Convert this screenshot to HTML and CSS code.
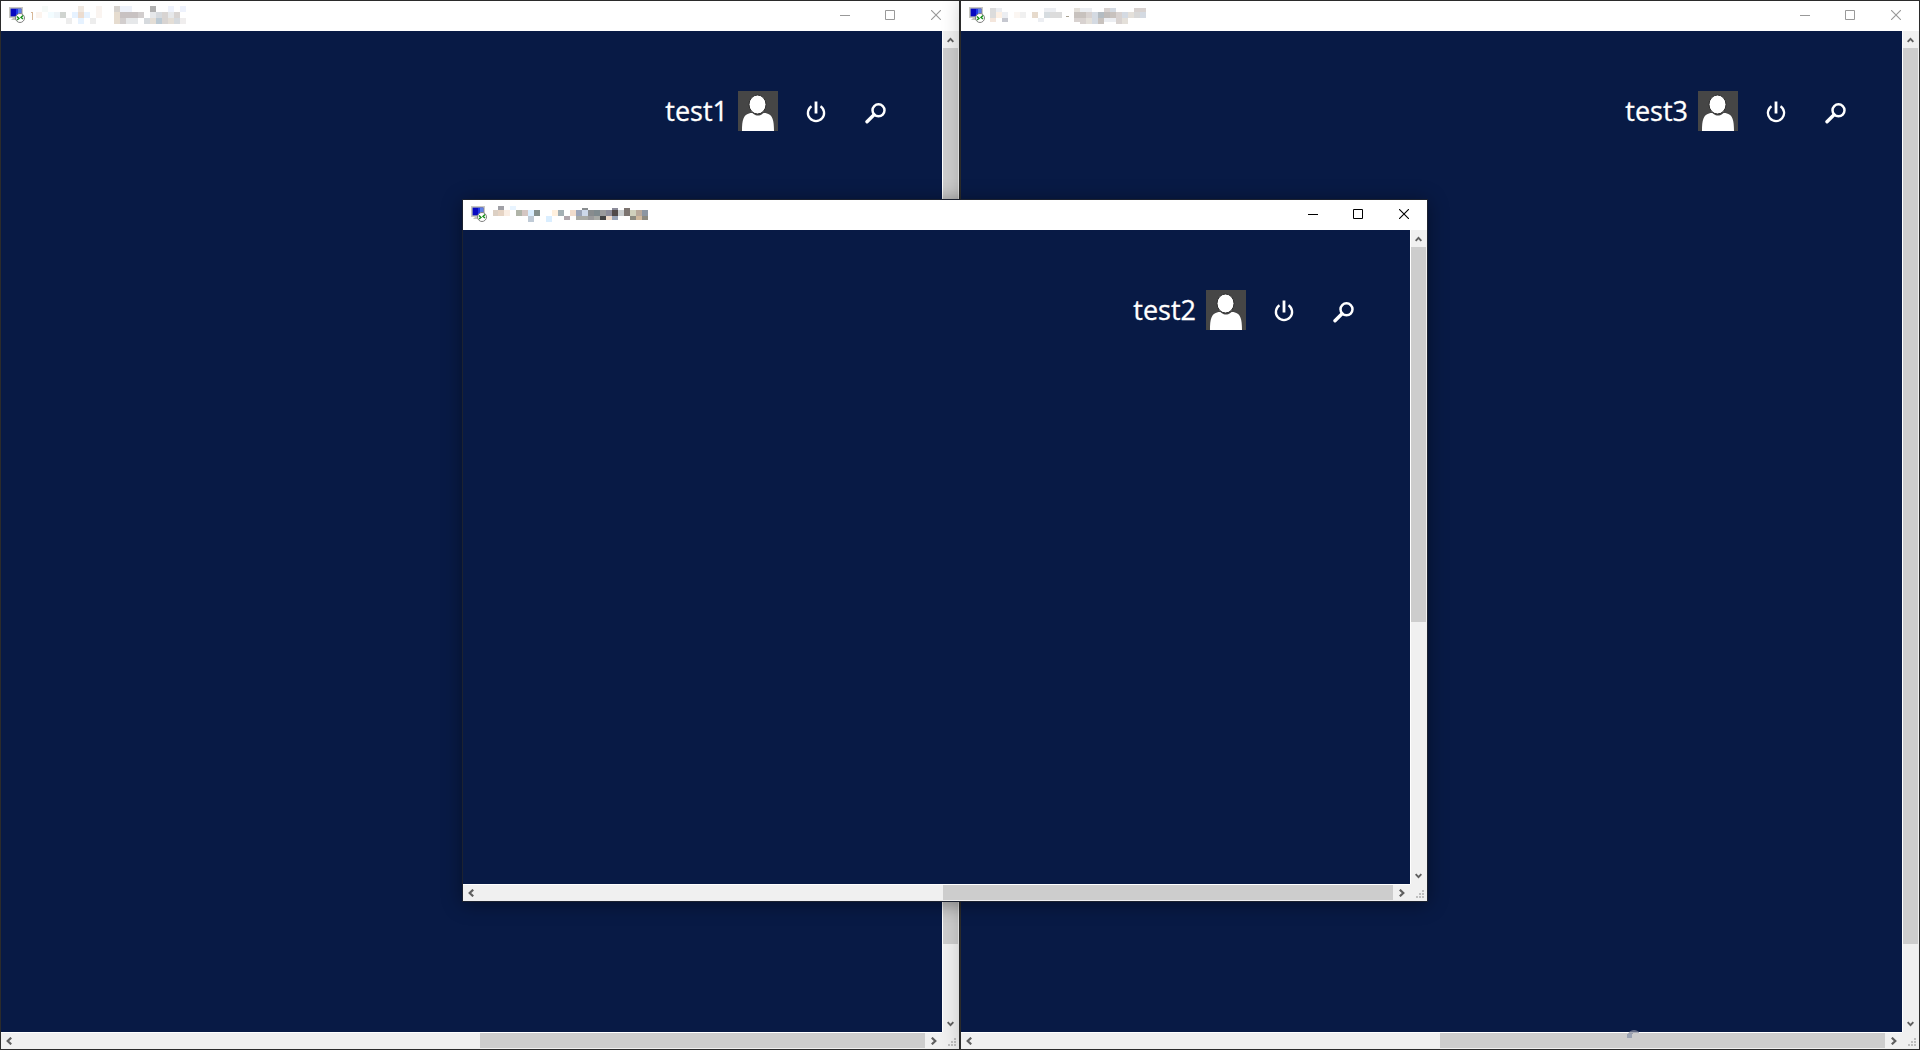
FILE: index.html
```html
<!DOCTYPE html>
<html lang="en">
<head>
<meta charset="utf-8">
<title>Remote desktops</title>
<link rel="stylesheet" href="styles.css">
</head>
<body>
<svg class="defs" aria-hidden="true">
  <symbol id="app" viewBox="0 0 16 16">
    <path d="M0 0h14v11H0z" fill="#c8c8c2"/><path d="M1.500 1.500h11v8h-11z" fill="#2632b8"/>
    <path d="M2 2h5v7H2z" fill="#0808c0"/><path d="M7 2h2v7H7z" fill="#2038e8"/><path d="M9 2h3v5H9z" fill="#5c80e8"/>
    <path d="M4 11h5v2H2z" fill="#c4c4bc"/>
    <circle cx="11" cy="11" r="4.500" fill="#fff" stroke="#808080"/>
    <path d="M8 9.500l2 2-2 1.500M14 8.500l-2 2 2 1.500" fill="none" stroke="#18901c" stroke-width="1.400"/>
  </symbol>
  <symbol id="min" viewBox="0 0 10 10"><path d="M0 5.500h10" stroke="currentColor"/></symbol>
  <symbol id="max" viewBox="0 0 10 10"><path d="M.5.5h9v9h-9z" fill="none" stroke="currentColor"/></symbol>
  <symbol id="close" viewBox="0 0 10 10"><path d="M0 0l10 10M10 0L0 10" stroke="currentColor" stroke-width="1.100"/></symbol>
  <symbol id="up" viewBox="0 0 8 6"><path d="M.7 5.200L4 1.700l3.300 3.500" fill="none" stroke="#606060" stroke-width="2.200"/></symbol>
  <symbol id="down" viewBox="0 0 8 6"><path d="M.7.8L4 4.300 7.300.8" fill="none" stroke="#606060" stroke-width="2.200"/></symbol>
  <symbol id="left" viewBox="0 0 6 8"><path d="M5.200.7L1.700 4l3.500 3.300" fill="none" stroke="#606060" stroke-width="2.200"/></symbol>
  <symbol id="right" viewBox="0 0 6 8"><path d="M.8.7L4.300 4 .8 7.300" fill="none" stroke="#606060" stroke-width="2.200"/></symbol>
  <symbol id="grip" viewBox="0 0 8 8"><path d="M6 0h2v2H6zM3 3h2v2H3zM6 3h2v2H6zM0 6h2v2H0zM3 6h2v2H3zM6 6h2v2H6z" fill="#bfbfbf"/></symbol>
  <symbol id="user" viewBox="0 0 40 40">
    <path d="M0 0h40v40H0z" fill="#464646"/>
    <path d="M4 40C4 29 5.500 24 11 22.500c3-.8 3.500-.5 5 .7 2 1.700 6 1.700 8 0 1.500-1.200 2-1.500 5-.7C34.500 24 36 29 36 40z" fill="#fff"/>
    <ellipse cx="19.500" cy="13.500" rx="8.500" ry="9.500" fill="#fff" stroke="#303030"/>
  </symbol>
  <symbol id="power" viewBox="0 0 20 22">
    <path d="M5.500 5.200a8.100 8.100 0 1 0 9 0" fill="none" stroke="#fff" stroke-width="2.300"/>
    <path d="M10 .5v12" stroke="#fff" stroke-width="2.800"/>
  </symbol>
  <symbol id="search" viewBox="0 0 21 21">
    <circle cx="13.500" cy="7.300" r="6" fill="none" stroke="#fff" stroke-width="2.500"/>
    <path d="M9 11.800L2 18.800" stroke="#fff" stroke-width="3.400" stroke-linecap="round"/>
  </symbol>
</svg>

<main class="desktop">
  <section class="window" aria-label="test1 session">
    <header class="titlebar">
      <svg class="app"><use href="#app"/></svg>
      <svg class="caption" viewBox="0 0 160 18">
        <path d="M1 7l2-1M2.500 6v8" stroke="#d8b898" fill="none"/>
        <path fill="#f6faf8" d="M12 0h6v6h-6z"/><path fill="#f0e8e0" d="M48 0h6v6h-6z"/><path fill="#faf4f0" d="M66 0h6v12h-6z"/>
        <path fill="#d6d2ce" d="M84 0h6v6h-6z"/><path fill="#eef2fa" d="M90 0h12v6H90z"/><path fill="#b0b0b0" d="M120 0h6v6h-6z"/><path fill="#eef2fc" d="M138 0h6v6h-6zM150 0h6v6h-6z"/>
        <path fill="#fcf4ee" d="M6 6h6v6H6z"/><path fill="#f2fcff" d="M18 6h6v6h-6z"/><path fill="#eef4f8" d="M24 6h6v6h-6z"/><path fill="#d0d4d0" d="M30 6h6v6h-6z"/>
        <path fill="#e6f2ff" d="M42 6h6v6h-6zM54 6h6v6h-6zM48 12h6v6h-6z"/><path fill="#ecdccf" d="M48 6h6v6h-6z"/><path fill="#ededed" d="M36 12h6v6h-6zM60 12h6v6h-6z"/>
        <path fill="#e6dccf" d="M84 6h6v12h-6z"/><path fill="#c8c2c2" d="M90 6h18v6H90z"/><path fill="#d2cece" d="M90 12h6v6h-6zM108 6h6v6h-6z"/>
        <path fill="#e6e8ea" d="M96 12h12v6H96zM120 6h6v6h-6zM138 6h6v6h-6z"/><path fill="#d6dade" d="M114 12h6v6h-6zM126 6h6v6h-6zM144 12h6v6h-6z"/>
        <path fill="#e4ded6" d="M120 12h6v6h-6zM138 12h6v6h-6z"/><path fill="#bccad4" d="M126 12h6v6h-6z"/><path fill="#d8d4d2" d="M132 6h6v12h-6zM144 6h6v6h-6z"/><path fill="#f0eeee" d="M150 12h6v6h-6z"/>
      </svg>
      <div class="controls">
        <button aria-label="Minimize"><svg><use href="#min"/></svg></button>
        <button aria-label="Maximize"><svg><use href="#max"/></svg></button>
        <button aria-label="Close"><svg><use href="#close"/></svg></button>
      </div>
    </header>
    <div class="screen">
      <div class="account"><span class="name">test1</span>
        <svg class="avatar"><use href="#user"/></svg>
        <button class="power" aria-label="Power"><svg><use href="#power"/></svg></button>
        <button class="search" aria-label="Search"><svg><use href="#search"/></svg></button>
      </div>
    </div>
    <div class="bar vertical">
      <button aria-label="Scroll up"><svg><use href="#up"/></svg></button>
      <div class="track"><div class="thumb" style="height:92.7%"></div></div>
      <button aria-label="Scroll down"><svg><use href="#down"/></svg></button>
    </div>
    <div class="bar horizontal">
      <button aria-label="Scroll left"><svg><use href="#left"/></svg></button>
      <div class="track"><div class="thumb" style="width:49.1%"></div></div>
      <button aria-label="Scroll right"><svg><use href="#right"/></svg></button>
    </div>
    <div class="corner"><svg><use href="#grip"/></svg></div>
  </section>

  <section class="window raised" aria-label="test3 session">
    <header class="titlebar">
      <svg class="app"><use href="#app"/></svg>
      <svg class="caption" viewBox="0 0 160 18">
        <path fill="#dcdcdc" d="M0 2h6v10H0zM60 6h12v6H60z"/><path fill="#eceef2" d="M6 2h6v4H6zM12 6h6v6h-6zM54 2h12v4H54zM48 12h6v4h-6z"/>
        <path fill="#fdf0e4" d="M6 6h6v6H6z"/><path fill="#f4e6dc" d="M0 12h6v4H0z"/><path fill="#c6c8d0" d="M12 12h6v4h-6z"/>
        <path fill="#fbf6f2" d="M24 6h6v6h-6z"/><path fill="#f0f0f0" d="M30 6h6v6h-6z"/><path fill="#e6dacc" d="M42 6h6v6h-6z"/><path fill="#d6dce0" d="M54 6h6v6h-6z"/>
        <path fill="#a8a090" d="M76 10h3v1h-3z"/>
        <path fill="#c8c2be" d="M84 6h6v6h-6zM90 6h6v6h-6zM120 6h6v6h-6zM108 12h6v6h-6z"/>
        <path fill="#d8d2d0" d="M84 12h6v4h-6zM90 12h6v6h-6zM96 6h6v6h-6zM126 6h6v6h-6zM126 12h6v6h-6zM114 2h6v4h-6zM144 2h12v4h-12z"/>
        <path fill="#b4bcc2" d="M108 6h6v6h-6z"/><path fill="#c0bcba" d="M114 6h6v6h-6z"/><path fill="#d4dae2" d="M102 6h6v6h-6zM102 12h6v6h-6zM120 2h6v4h-6zM132 6h6v6h-6zM150 6h6v6h-6z"/>
        <path fill="#e4e0da" d="M96 12h6v6h-6zM138 6h6v6h-6zM132 12h6v6h-6zM84 2h6v4h-6z"/><path fill="#d8d8d8" d="M144 6h6v6h-6z"/><path fill="#eceef2" d="M90 2h12v4H90zM114 12h12v4h-12z"/>
      </svg>
      <div class="controls">
        <button aria-label="Minimize"><svg><use href="#min"/></svg></button>
        <button aria-label="Maximize"><svg><use href="#max"/></svg></button>
        <button aria-label="Close"><svg><use href="#close"/></svg></button>
      </div>
    </header>
    <div class="screen">
      <div class="account"><span class="name">test3</span>
        <svg class="avatar"><use href="#user"/></svg>
        <button class="power" aria-label="Power"><svg><use href="#power"/></svg></button>
        <button class="search" aria-label="Search"><svg><use href="#search"/></svg></button>
      </div>
    </div>
    <div class="bar vertical">
      <button aria-label="Scroll up"><svg><use href="#up"/></svg></button>
      <div class="track"><div class="thumb" style="height:92.7%"></div></div>
      <button aria-label="Scroll down"><svg><use href="#down"/></svg></button>
    </div>
    <div class="bar horizontal">
      <button aria-label="Scroll left"><svg><use href="#left"/></svg></button>
      <div class="track"><div class="thumb" style="width:49.1%"></div></div>
      <button aria-label="Scroll right"><svg><use href="#right"/></svg></button>
    </div>
    <div class="corner"><svg><use href="#grip"/></svg></div>
    <svg class="smudge" viewBox="0 0 12 8"><path d="M0 8V4h5v4z" fill="#9ca4b4"/><path d="M1 4c2-5 8-5 11-2v1H6v1z" fill="#848a9c" opacity=".7"/></svg>
  </section>

  <section class="window front" aria-label="test2 session">
    <header class="titlebar">
      <svg class="app"><use href="#app"/></svg>
      <svg class="caption" viewBox="0 0 160 18">
        <g transform="translate(1 -1)">
        <path fill="#a0a0a6" d="M5 2h6v4H5z"/><path fill="#e8f4ff" d="M17 2h6v4h-6z"/>
        <path fill="#dcd0c4" d="M0 6h5v6H0z"/><path fill="#e6d4c4" d="M5 6h6v6H5z"/><path fill="#faeee4" d="M11 6h6v6h-6z"/><path fill="#b0b4a8" d="M23 6h6v6h-6z"/><path fill="#d4c6c2" d="M29 6h6v6h-6z"/>
        <path fill="#daeeff" d="M35 6h6v6h-6zM53 12h6v6h-6z"/><path fill="#84908e" d="M41 6h6v6h-6z"/><path fill="#bfcad6" d="M35 12h6v6h-6z"/><path fill="#fff0de" d="M59 6h6v6h-6z"/><path fill="#a4b0b4" d="M65 6h6v6h-6z"/><path fill="#b0a6ac" d="M71 12h6v4h-6z"/>
        <path fill="#f0dccc" d="M77 6h6v6h-6z"/><path fill="#9aa4b8" d="M83 6h6v6h-6z"/><path fill="#ccd8ea" d="M89 6h6v6h-6z"/><path fill="#888c8e" d="M95 6h6v6h-6zM89 4h6v2h-6z"/><path fill="#7f8a8e" d="M101 6h6v6h-6z"/>
        <path fill="#9a9a9c" d="M107 6h6v6h-6zM95 12h6v4h-6z"/><path fill="#8c8c9a" d="M113 6h6v6h-6zM119 4h6v2h-6z"/><path fill="#504a4a" d="M119 6h6v6h-6z"/><path fill="#c8ccce" d="M125 6h6v6h-6z"/><path fill="#7c7470" d="M131 4h6v8h-6z"/>
        <path fill="#d0d0bc" d="M137 6h6v6h-6z"/><path fill="#b8a89a" d="M143 6h6v6h-6z"/><path fill="#8c96a2" d="M149 6h6v6h-6z"/>
        <path fill="#a8aaa6" d="M83 12h12v4H83zM101 12h6v4h-6z"/><path fill="#444446" d="M107 12h6v4h-6z"/><path fill="#f0dccc" d="M113 12h6v4h-6z"/><path fill="#98a4b8" d="M119 12h6v4h-6z"/><path fill="#8c8a80" d="M137 12h6v4h-6zM149 12h6v4h-6z"/><path fill="#d0b89c" d="M143 12h6v4h-6z"/>
        </g>
      </svg>
      <div class="controls">
        <button aria-label="Minimize"><svg><use href="#min"/></svg></button>
        <button aria-label="Maximize"><svg><use href="#max"/></svg></button>
        <button aria-label="Close"><svg><use href="#close"/></svg></button>
      </div>
    </header>
    <div class="screen">
      <div class="account"><span class="name">test2</span>
        <svg class="avatar"><use href="#user"/></svg>
        <button class="power" aria-label="Power"><svg><use href="#power"/></svg></button>
        <button class="search" aria-label="Search"><svg><use href="#search"/></svg></button>
      </div>
    </div>
    <div class="bar vertical">
      <button aria-label="Scroll up"><svg><use href="#up"/></svg></button>
      <div class="track"><div class="thumb" style="height:60.5%"></div></div>
      <button aria-label="Scroll down"><svg><use href="#down"/></svg></button>
    </div>
    <div class="bar horizontal">
      <button aria-label="Scroll left"><svg><use href="#left"/></svg></button>
      <div class="track"><div class="thumb" style="width:49.3%"></div></div>
      <button aria-label="Scroll right"><svg><use href="#right"/></svg></button>
    </div>
    <div class="corner"><svg><use href="#grip"/></svg></div>
  </section>
</main>
</body>
</html>
```
FILE: styles.css
```css
* { box-sizing: border-box; }
body { margin: 0; font-family: "Segoe UI", "Open Sans", "Noto Sans", sans-serif; }
svg { display: block; }
.defs { display: none; }
button { border: 0; padding: 0; background: none; color: inherit; display: flex; align-items: center; justify-content: center; }

.desktop {
  position: relative;
  display: grid;
  grid-template-columns: 1fr 1fr;
  min-height: 100vh;
  background: #222;
  overflow: hidden;
}
.window {
  display: grid;
  grid-template: 30px 1fr 17px / 1fr 17px;
  border: 1px solid #2b2b2b;
  background: #f0f0f0;
  color: #999;
}
.raised { position: relative; box-shadow: 0 0 18px rgba(0, 0, 0, .2); }
.front {
  position: absolute;
  inset: 199px 492px 148px 462px;
  border-color: #1c2230;
  color: #000;
  box-shadow: 0 2px 18px rgba(0, 0, 0, .4);
}

.titlebar { grid-column: 1 / -1; display: flex; padding-left: 8px; background: #fff; }
.app { width: 16px; height: 16px; margin-top: 6px; }
.caption { width: 160px; height: 18px; margin: 5px 0 0 5px; shape-rendering: crispEdges; }
.controls { display: flex; margin-left: auto; height: 28px; }
.controls button { width: 46px; }
.controls button:first-child { padding-left: 2px; }
.controls svg { width: 10px; height: 10px; }

.screen { background: #081a45; padding: 60px 56px 0 0; }
.account { display: flex; justify-content: flex-end; align-items: center; }
.name { color: #fff; font-size: 27px; line-height: 40px; margin-right: 10px; -webkit-text-stroke: 0.3px #fff; }
.avatar { width: 40px; height: 40px; }
.power { margin-left: 28px; padding-top: 2px; }
.power svg { width: 20px; height: 22px; }
.search { margin-left: 39px; padding-top: 4px; }
.search svg { width: 21px; height: 21px; }

.bar { display: flex; }
.track { flex: 1; display: flex; }
.thumb { background: #cdcdcd; }
.vertical { flex-direction: column; border-left: 1px solid #fff; border-right: 1px solid #f0f0f0; }
.vertical button { height: 17px; padding-top: 1px; }
.vertical .track { flex-direction: column; }
.vertical svg { width: 7px; height: 6px; }
.horizontal { border-top: 1px solid #fff; border-bottom: 1px solid #f0f0f0; }
.horizontal button { width: 17px; }
.horizontal button:first-child { padding-right: 2px; }
.horizontal .track { justify-content: flex-end; }
.horizontal svg { width: 6px; height: 8px; }
.corner { display: flex; align-items: flex-end; justify-content: flex-end; padding: 0 3px 3px 0; }
.corner svg { width: 8px; height: 8px; }
.smudge { position: absolute; right: 280px; bottom: 11px; width: 12px; height: 8px; }
```
